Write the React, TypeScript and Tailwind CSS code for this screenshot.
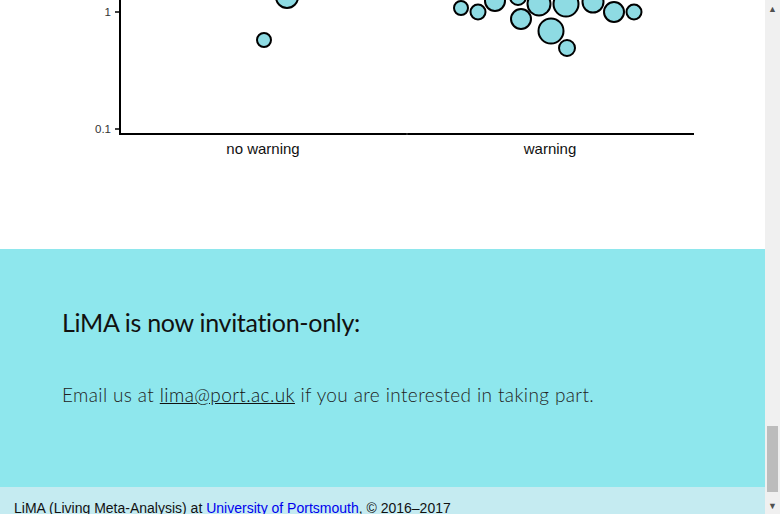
const bubbles: [number, number, number][] = [
  [287, -3, 11],
  [264, 40, 7],
  [461, 8, 7],
  [478, 12, 7.5],
  [495, 1, 10],
  [518, -3, 8],
  [539, 4, 11.5],
  [566, 4, 12.5],
  [593, 2, 10.5],
  [614, 12, 10],
  [634, 12, 7.5],
  [521, 19, 10],
  [551, 31, 12.5],
  [567, 48, 8],
];

const Chart = () => (
  <svg width="765" height="249" className="block">
    <line x1="120" y1="0" x2="120" y2="135" stroke="#000" strokeWidth="2" />
    <line x1="119" y1="134" x2="694" y2="134" stroke="#000" strokeWidth="2" />
    <line x1="407" y1="133" x2="407" y2="135" stroke="#444" strokeWidth="1" />
    <line x1="115" y1="12" x2="120" y2="12" stroke="#000" strokeWidth="1.5" />
    <line x1="115" y1="129" x2="120" y2="129" stroke="#000" strokeWidth="1.5" />
    <text x="111" y="16" textAnchor="end" fontSize="11.5" fill="#333" fontFamily="Liberation Sans, Arial, sans-serif">
      1
    </text>
    <text x="111" y="133" textAnchor="end" fontSize="11.5" fill="#333" fontFamily="Liberation Sans, Arial, sans-serif">
      0.1
    </text>
    {bubbles.map(([cx, cy, r], i) => (
      <circle key={i} cx={cx} cy={cy} r={r} fill="#8edbe3" stroke="#000" strokeWidth="2" />
    ))}
    <text x="263" y="154" textAnchor="middle" fontSize="15" fill="#111" fontFamily="Liberation Sans, Arial, sans-serif">
      no warning
    </text>
    <text x="550" y="154" textAnchor="middle" fontSize="15" fill="#111" fontFamily="Liberation Sans, Arial, sans-serif">
      warning
    </text>
  </svg>
);

const Scrollbar = () => (
  <div className="w-[15px] h-[514px] bg-[#f0f0f0] flex flex-col items-center">
    <div className="h-[17px] flex items-center justify-center text-[#505050] text-[9px] leading-none">▲</div>
    <div className="flex-1 w-full flex flex-col justify-end px-[2px] pb-[5px]">
      <div className="h-[66px] w-full bg-[#bcbcbc]" />
    </div>
    <div className="h-[17px] flex items-center justify-center text-[#505050] text-[9px] leading-none">▼</div>
  </div>
);

export default function App() {
  return (
    <div className="w-[780px] h-[514px] flex overflow-hidden bg-white">
      <div className="w-[765px] flex flex-col">
        <Chart />
        <section className="h-[238px] bg-[#8ee7ed] px-[62px] pt-[58px] font-['Lato','Open_Sans',sans-serif]">
          <h2 className="text-[25px] leading-[30px] text-[#111] tracking-[-0.3px]">LiMA is now invitation-only:</h2>
          <p className="mt-[44px] text-[19px] leading-[27px] text-[#222] font-light tracking-[0.38px]">
            Email us at <a className="underline text-[#111]">lima@port.ac.uk</a> if you are interested in taking part.
          </p>
        </section>
        <footer className="h-[27px] bg-[#c5ebf1] px-[14px] pt-[11px] overflow-hidden text-[14px] leading-[20px] text-[#111] font-['Liberation_Sans',Arial,sans-serif]">
          LiMA (Living Meta-Analysis) at <a className="text-[#0000ee]">University of Portsmouth</a>, © 2016–2017
        </footer>
      </div>
      <Scrollbar />
    </div>
  );
}
